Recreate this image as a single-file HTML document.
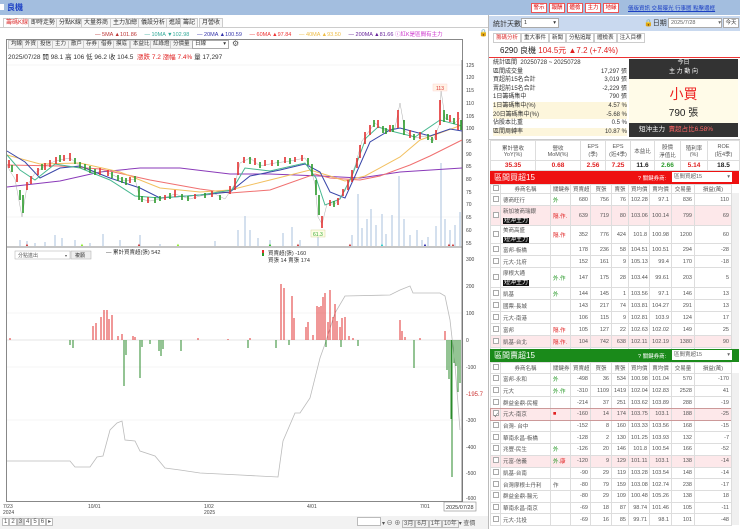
<!DOCTYPE html>
<html><head><meta charset="utf-8"><style>
*{margin:0;padding:0;box-sizing:border-box}
body{width:740px;height:529px;overflow:hidden;background:#fff;font-family:"Liberation Sans","Noto Sans CJK TC",sans-serif;font-size:6px;color:#333;position:relative}
.a{position:absolute;white-space:nowrap}
.tab{position:absolute;top:18px;height:10px;border:1px solid #ccc;border-bottom:none;background:#f6f6f6;font-size:6px;line-height:9px;padding:0 2px;color:#333}
.btn{position:absolute;height:9px;border:1px solid #ccc;background:#f4f4f4;font-size:5.5px;line-height:7px;padding:0 2px}
table{border-collapse:collapse;font-size:5.5px;table-layout:fixed}
td{border:1px solid #ddd;padding:0 2px;text-align:right;overflow:hidden;white-space:nowrap;color:#555}
td.l{text-align:left}
td.c{text-align:center}
.tag{background:#111;color:#fff;padding:0 1px;font-size:6px}
.cb{display:inline-block;width:6px;height:6px;border:1px solid #aaa;background:#fff}
.r{color:#e02020}.g{color:#2a9a2a}
</style></head><body>
<div class="a" style="left:0;top:0;width:740px;height:15px;background:#a3bedf"></div>
<div class="a" style="left:0;top:4px;width:4px;height:6px;background:#fff"></div>
<div class="a" style="left:7px;top:2px;font-size:8px;color:#1b3fc4;font-weight:bold">良機</div>
<div class="a" style="left:531px;top:3px;height:10px;width:16px;background:#fff;border:1px solid #e55;color:#d00;font-size:5.5px;line-height:8px;text-align:center">警示</div>
<div class="a" style="left:549px;top:3px;height:10px;width:16px;background:#fff;border:1px solid #e55;color:#d00;font-size:5.5px;line-height:8px;text-align:center">報酬</div>
<div class="a" style="left:567px;top:3px;height:10px;width:16px;background:#fff;border:1px solid #e55;color:#d00;font-size:5.5px;line-height:8px;text-align:center">體檢</div>
<div class="a" style="left:585px;top:3px;height:10px;width:16px;background:#fff;border:1px solid #e55;color:#d00;font-size:5.5px;line-height:8px;text-align:center">主力</div>
<div class="a" style="left:603px;top:3px;height:10px;width:16px;background:#fff;border:1px solid #e55;color:#d00;font-size:5.5px;line-height:8px;text-align:center">地緣</div>
<div class="a" style="left:628px;top:4px;font-size:5.5px;color:#1b3fc4;text-decoration:underline">儀版資訊 交易曝光 行事曆 點擊邊框</div>

<div class="tab" style="left:3px;color:#d33;background:#fff">籌碼K線</div>
<div class="tab" style="left:28px">即時走勢</div>
<div class="tab" style="left:56px">分點K線</div>
<div class="tab" style="left:81px">大量券商</div>
<div class="tab" style="left:110px">主力加總</div>
<div class="tab" style="left:138px">儀設分析</div>
<div class="tab" style="left:166px">進設</div>
<div class="tab" style="left:180px">籌記</div>
<div class="tab" style="left:199px">月營收</div>
<div class="a" style="left:0;top:27px;width:488px;height:1px;background:#ccc"></div>
<div class="a" style="left:95px;top:30px;font-size:5.5px;color:#b33">— 5MA ▲101.86 <span style="color:#3a9">&nbsp;&nbsp;&nbsp;&nbsp;— 10MA ▼102.98</span> <span style="color:#33a">&nbsp;&nbsp;&nbsp;&nbsp;— 20MA ▲100.59</span> <span style="color:#e33">&nbsp;&nbsp;&nbsp;&nbsp;— 60MA ▲97.84</span> <span style="color:#eb4">&nbsp;&nbsp;&nbsp;&nbsp;— 40MA ▲93.50</span> <span style="color:#629">&nbsp;&nbsp;&nbsp;&nbsp;— 200MA ▲81.66</span> <span style="color:#c3c">ⓘ紅K是區間有主力</span></div>
<div class="a" style="left:479px;top:29px;font-size:7px">🔒</div>

<div class="a" style="left:6px;top:39px;width:457px;height:463px;border:1px solid #888"></div>
<div class="btn" style="left:8px;top:40px">均線</div><div class="btn" style="left:22px;top:40px">外資</div><div class="btn" style="left:37px;top:40px">投信</div><div class="btn" style="left:52px;top:40px">主力</div><div class="btn" style="left:68px;top:40px">散戶</div><div class="btn" style="left:83px;top:40px">存券</div><div class="btn" style="left:98px;top:40px">借券</div><div class="btn" style="left:113px;top:40px">摸底</div><div class="btn" style="left:130px;top:40px">本益比</div><div class="btn" style="left:150px;top:40px">紅綠燈</div><div class="btn" style="left:170px;top:40px">分價量</div>
<div class="a" style="left:192px;top:40px;width:37px;height:9px;border:1px solid #aaa;font-size:5.5px;line-height:7px;padding-left:2px;background:#fff">日線<span style="float:right;padding-right:2px">▾</span></div>
<div class="a" style="left:232px;top:39px;font-size:8px;color:#555">⚙</div>
<div class="a" style="left:8px;top:51px;font-size:6.5px;color:#333">2025/07/28 開 98.1 高 106 低 96.2 收 104.5 &nbsp;<span class="r">漲跌 7.2 漲幅 7.4%</span> 量 17,297</div>

<svg style="position:absolute;left:0;top:0" width="490" height="529" viewBox="0 0 490 529">
<g stroke="#eee" stroke-width="0.6"><path d="M7 65H462M7 141H462M7 217H462M7 313H462M7 367H462M7 420H462"/></g>
<path d="M462 60V502M7 247H462" stroke="#666" stroke-width="0.8"/>
<g font-size="5" fill="#444" font-family="Liberation Sans">
<text x="466" y="67">125</text><text x="466" y="79">120</text><text x="466" y="92">115</text><text x="466" y="105">110</text><text x="466" y="118">105</text><text x="466" y="130">100</text><text x="466" y="143">95</text><text x="466" y="156">90</text><text x="466" y="168">85</text><text x="466" y="181">80</text><text x="466" y="194">75</text><text x="466" y="206">70</text><text x="466" y="219">65</text><text x="466" y="232">60</text><text x="466" y="245">55</text>
<text x="466" y="261">300</text><text x="466" y="288">200</text><text x="466" y="315">100</text><text x="466" y="342">0</text><text x="466" y="369">-100</text><text x="466" y="422">-300</text><text x="466" y="449">-400</text><text x="466" y="475">-500</text><text x="466" y="500">-600</text>
<text x="466" y="396" fill="#c33" font-size="6">-195.7</text>
<text x="3" y="508">7/23</text><text x="3" y="514">2024</text><text x="88" y="508">10/01</text><text x="204" y="508">1/02</text><text x="204" y="514">2025</text><text x="307" y="508">4/01</text><text x="420" y="508">7/01</text>
</g>
<rect x="444" y="502" width="32" height="9" fill="#fff" stroke="#888" stroke-width="0.6"/><text x="446" y="509" font-size="5.5" fill="#333">2025/07/28</text>
<g stroke="#b8cbe3" stroke-width="1.2" fill="none">
<path d="M20 246V240M27 246V241M35 246V243M45 246V242M55 246V235M62 246V238M75 246V240M90 246V243M103 246V234M120 246V240M140 246V235M160 246V244M215 246V241M238 246V230M245 246V216M250 246V230M258 246V238M270 246V240M283 246V233M292 246V227M300 246V240M318 246V237M352 246V235M358 246V194M362 246V228M367 246V219M371 246V209M376 246V225M382 246V214M386 246V234M392 246V215M399 246V176M404 246V219M410 246V235M417 246V230M422 246V240M428 246V237M436 246V226M441 246V163M445 246V219M450 246V230M455 246V225M460 246V212"/>
</g>
<g font-size="4" fill="#c33"><text x="25" y="246">▲</text><text x="80" y="246" fill="#8e2">▲</text><text x="137" y="246">▲</text><text x="176" y="246" fill="#8e2">▲</text><text x="268" y="246" fill="#2b2">▲</text><text x="296" y="246">▲</text><text x="348" y="246">▲</text><text x="380" y="246" fill="#2cc">▲</text><text x="423" y="246" fill="#22a">▲</text><text x="447" y="246">▲▲</text></g>
<g fill="none" stroke-width="1">
<path stroke="#8a3ab9" d="M7 187L60 181L100 172L140 168L180 168L230 174L270 174L320 176L360 178L400 172L462 168"/>
<path stroke="#f07070" d="M7 165L60 166L100 169L150 180L200 189L230 193L270 190L315 174L330 178L360 180L380 176L410 165L430 156L462 140"/>
<path stroke="#f2c060" d="M7 155L40 164L80 163L120 172L160 188L200 192L230 190L270 180L310 170L330 176L345 181L365 176L400 157L420 140L440 133L462 125"/>
<path stroke="#3845a8" d="M7 151L25 162L40 178L60 168L80 166L110 178L140 188L160 198L200 195L230 192L250 176L280 170L305 164L320 172L330 192L345 198L355 176L370 142L390 130L400 128L430 136L450 129L462 131"/>
<path stroke="#48b890" d="M7 155L20 170L35 180L55 164L80 168L110 180L135 196L160 198L200 195L232 190L245 168L270 171L305 163L316 178L325 205L340 199L352 176L366 138L378 127L395 132L415 137L440 120L462 126"/>
</g>
<path fill="none" stroke="#999" stroke-width="0.4" d="M7 166L15 179L22 217L27 186L35 173L45 166L55 161L70 158L80 166L95 173L105 171L115 176L125 181L135 179L140 199L150 201L160 199L175 194L190 199L200 196L215 194L225 199L235 184L240 163L250 158L260 166L275 163L290 161L305 158L310 166L315 184L318 217L322 224L327 204L335 204L345 191L355 166L362 141L375 123L385 131L395 128L400 103L405 131L415 138L425 136L433 141L440 123L441 90L445 118L455 123L460 118"/>
<path fill="none" stroke="#e23030" stroke-width="1.6" d="M9 160V168M17 174V182M27 182V190M31 176V184M38 168V175M45 163V170M50 160V167M56 157V164M64 155V161M70 153V161M100 168V175M108 170V176M130 177V183M148 197V203M165 195V200M175 190V197M195 194V199M212 191V197M230 186V194M235 178V190M238 162V175M244 157V163M255 158V165M265 160V166M272 160V166M285 157V163M295 157V162M302 155V161M322 216V228M330 200V206M338 198V205M343 189V196M348 180V190M352 170V182M357 158V168M360 145V158M365 132V144M370 125V135M378 120V128M390 125V132M398 110V128M410 130V138M420 132V139M436 130V140M440 100V125M450 115V122M458 112V130"/>
<path fill="none" stroke="#2a9a2a" stroke-width="1.6" d="M12 165V172M20 190V200M23 195V213M42 164V170M60 155V162M75 158V164M80 162V168M85 164V170M90 166V173M95 169V175M112 172V178M118 175V181M122 177V183M126 178V185M135 176V182M139 186V200M142 196V202M155 197V203M160 196V201M170 193V199M182 194V200M188 196V201M205 193V198M220 195V200M250 157V164M260 162V168M278 160V166M290 158V164M308 158V165M312 164V176M316 180V195M319 195V215M334 201V207M374 120V127M383 126V133M386 128V134M393 125V132M404 120V135M414 134V140M428 134V140M432 137V143M444 110V122M447 114V120M454 118V124M461 120V130"/>
<rect x="433" y="84" width="14" height="7" fill="#fff3e6" stroke="#fcc" stroke-width="0.4"/><text x="436" y="90" font-size="5" fill="#d33">113</text>
<rect x="311" y="230" width="14" height="7" fill="#fdfde6" stroke="#cc8" stroke-width="0.4"/><text x="313" y="236" font-size="5" fill="#3a3">61.3</text>
<path d="M7 340H462" stroke="#ccc" stroke-width="0.5"/>
<path fill="none" stroke="#bbb" stroke-width="0.8" d="M7 461L70 461L75 467L90 467L97 457L103 456L110 430L117 423L122 421L125 440L135 441L140 451L155 456L165 468L180 470L200 473L240 475L278 477L283 441L295 413L300 413L310 398L320 358L325 344L335 313L345 296L390 295L400 290L410 286L413 293L440 293L445 296L450 320L455 365L460 430"/>
<path fill="none" stroke="#e23030" stroke-width="1" d="M10 340V338M93 340V326M96 340V323M101 340V317M104 340V310M107 340V310M109 340V319M112 340V315M118 340V336M122 340V334M133 340V336M135 340V337M198 340V338M228 340V339M250 340V338M281 340V284M284 340V288M292 340V296M294 340V318M306 340V327M308 340V322M313 340V335M317 340V306M319 340V307M321 340V306M323 340V297M325 340V293M328 340V322M330 340V290M333 340V317M335 340V304M337 340V321M340 340V327M342 340V318M345 340V317M349 340V336M353 340V338M400 340V320M402 340V331M405 340V337M420 340V338M445 340V331"/>
<path fill="none" stroke="#2a8a2a" stroke-width="1" d="M70 340V345M73 340V348M124 340V386M126 340V355M140 340V378M142 340V347M150 340V344M159 340V351M161 340V356M163 340V349M181 340V351M248 340V348M276 340V348M289 340V345M326 340V347M341 340V347M358 340V346M414 340V368M447 340V370M449 340V379M451 340V419M452 340V477M454 340V363M456 340V366M458 340V392M460 340V383"/>
<rect x="15" y="251" width="55" height="8" fill="#fff" stroke="#aaa" stroke-width="0.5"/><text x="18" y="257" font-size="5" fill="#555">分點進出</text><text x="65" y="257" font-size="4" fill="#555">▾</text>
<rect x="71" y="251" width="20" height="8" fill="#eee" stroke="#aaa" stroke-width="0.5"/><text x="75" y="257" font-size="5" fill="#333">複願</text>
<text x="106" y="254" font-size="5.5" fill="#333">— 累計買賣超(張) 542</text>
<rect x="262" y="250" width="2" height="3" fill="#e23030"/><rect x="262" y="253" width="2" height="3" fill="#2a9a2a"/>
<text x="268" y="255" font-size="5.5" fill="#333">買賣超(張) -160</text><text x="268" y="262" font-size="5.5" fill="#333">買張 14 賣張 174</text>
</svg>
<div class="a" style="left:0;top:516px;width:488px;height:13px;background:#f2f2f2"></div>
<div class="a" style="left:2px;top:518px;font-size:6px;color:#555"><span style="border:1px solid #bbb;padding:0 1px;background:#fff">1</span><span style="border:1px solid #bbb;padding:0 1px;background:#fff">2</span><span style="border:1px solid #bbb;padding:0 1px;background:#ddd">3</span><span style="border:1px solid #bbb;padding:0 1px;background:#fff">4</span><span style="border:1px solid #bbb;padding:0 1px;background:#fff">5</span><span style="border:1px solid #bbb;padding:0 1px;background:#fff">6</span><span style="border:1px solid #bbb;padding:0 1px;background:#fff">▸</span></div>
<div class="a" style="left:357px;top:517px;width:24px;height:9px;border:1px solid #bbb;background:#fff"></div>
<div class="a" style="left:382px;top:518px;font-size:6px;color:#555">▾ ⊖ ⊕ <span style="border:1px solid #bbb;padding:0 1px">3月</span><span style="border:1px solid #bbb;padding:0 1px">6月</span><span style="border:1px solid #bbb;padding:0 1px">1年</span><span style="border:1px solid #bbb;padding:0 1px">10年</span>▾ 查價</div>
<div class="a" style="left:488px;top:15px;width:1px;height:514px;background:#bbb"></div>

<div class="a" style="left:489px;top:16px;width:251px;height:15px;background:#c9d9ef"></div>
<div class="a" style="left:493px;top:19px;font-size:7px;color:#333">統計天數</div>
<div class="a" style="left:521px;top:18px;width:38px;height:10px;background:#fff;border:1px solid #aaa;font-size:5.5px;padding-left:2px;line-height:8px">1<span style="float:right;padding-right:2px">▾</span></div>
<div class="a" style="left:644px;top:18px;font-size:7px;color:#333">🔒日期</div>
<div class="a" style="left:668px;top:18px;width:54px;height:10px;background:#fff;border:1px solid #aaa;font-size:5.5px;padding-left:2px;line-height:8px;color:#666">2025/7/28 <span style="float:right">▾</span></div>
<div class="a" style="left:723px;top:18px;width:16px;height:10px;background:#fff;border:1px solid #aaa;font-size:5.5px;line-height:8px;text-align:center">今天</div>
<div class="a" style="left:493px;top:33px;font-size:5.5px"><span style="border:1px solid #ccc;padding:1px 2px;color:#d33">籌碼分析</span><span style="border:1px solid #ccc;padding:1px 2px">重大事件</span><span style="border:1px solid #ccc;padding:1px 2px">新聞</span><span style="border:1px solid #ccc;padding:1px 2px">分點追蹤</span><span style="border:1px solid #ccc;padding:1px 2px">體檢表</span><span style="border:1px solid #ccc;padding:1px 2px">注入目標</span></div>
<div class="a" style="left:500px;top:45px;font-size:8px;color:#222">6290 良機 <span class="r">104.5元 ▲7.2 (+7.4%)</span></div>
<div class="a" style="left:489px;top:57px;width:251px;height:1px;background:#e33"></div>
<div class="a" style="left:493px;top:59px;width:134px;font-size:6px;line-height:8.6px;color:#333">
<div>統計區間 &nbsp;20250728 ~ 20250728</div>
<div>區間成交量<span style="float:right">17,297 張</span></div>
<div>買超前15名合計<span style="float:right">3,019 張</span></div>
<div>賣超前15名合計<span style="float:right">-2,229 張</span></div>
<div>1日籌碼集中<span style="float:right">790 張</span></div>
<div style="background:#fdf6dc">1日籌碼集中(%)<span style="float:right">4.57 %</span></div>
<div style="background:#fdf6dc">20日籌碼集中(%)<span style="float:right">-5.68 %</span></div>
<div>佔股本比重<span style="float:right">0.5 %</span></div>
<div style="background:#fdf6dc">區間周轉率<span style="float:right">10.87 %</span></div>
</div>
<div class="a" style="left:629px;top:59px;width:109px;height:20px;background:#333;color:#fff;font-size:6px;text-align:center;line-height:9px">今日<br>主 力 動 向</div>
<div class="a" style="left:629px;top:79px;width:109px;height:44px;background:#fffbe8;text-align:center"><div style="color:#e22;font-size:14px;margin-top:5px">小買</div><div style="font-size:10px;color:#222">790 張</div></div>
<div class="a" style="left:629px;top:123px;width:109px;height:14px;background:#333;color:#fff;font-size:6.5px;line-height:14px;padding-left:10px">短沖主力 &nbsp;<span style="color:#f66">賣超占比6.58%</span></div>
<div class="a" style="left:489px;top:139px;width:251px;height:1px;background:#ccc"></div>
<table class="a" style="left:490px;top:140px;width:249px">
<colgroup><col style="width:45px"><col style="width:45px"><col style="width:25px"><col style="width:25px"><col style="width:24px"><col style="width:26px"><col style="width:27px"><col style="width:32px"></colgroup>
<tr style="height:20px"><td class="c">累計營收<br>YoY(%)</td><td class="c">營收<br>MoM(%)</td><td class="c">EPS<br>(季)</td><td class="c">EPS<br>(近4季)</td><td class="c">本益比</td><td class="c">股價<br>淨值比</td><td class="c">殖利率<br>(%)</td><td class="c">ROE<br>(近4季)</td></tr>
<tr style="height:10px;font-weight:bold;font-size:6.5px"><td class="c r">35.35</td><td class="c r">0.68</td><td class="c r">2.56</td><td class="c r">7.25</td><td class="c" style="color:#222">11.6</td><td class="c g">2.66</td><td class="c r">5.14</td><td class="c" style="color:#222">18.5</td></tr>
</table>
<div class="a" style="left:490px;top:171px;width:249px;height:13px;background:#ee1111"></div>
<div class="a" style="left:494px;top:172px;font-size:8px;color:#fff">區間買超15</div>
<div class="a" style="left:638px;top:174px;font-size:5.5px;color:#fff">? 關鍵券商:</div>
<div class="a" style="left:672px;top:172px;width:60px;height:10px;background:#fff;font-size:5.5px;line-height:10px;padding-left:2px;color:#666">區間買超15<span style="float:right;padding-right:2px">▾</span></div>
<table class="a" style="left:490px;top:184px;width:241px">
<colgroup><col style="width:10px"><col style="width:50px"><col style="width:20px"><col style="width:20px"><col style="width:21px"><col style="width:17px"><col style="width:21px"><col style="width:22px"><col style="width:23px"><col style="width:37px"></colgroup>
<tr style="height:9px"><td class="c"><span class="cb"></span></td><td class="c">券商名稱</td><td class="c">關鍵券商</td><td class="c">買賣超</td><td class="c">買張</td><td class="c">賣張</td><td class="c">買均價</td><td class="c">賣均價</td><td class="c">交易量</td><td class="c">損益(萬)</td></tr>
<tr style="height:12px"><td><span class="cb"></span></td><td class="l">德商旺行</td><td class="l g">外</td><td>680</td><td>756</td><td>76</td><td>102.28</td><td>97.1</td><td>836</td><td>110</td></tr>
<tr style="height:20px;background:#fde8ea"><td><span class="cb"></span></td><td class="l">新加坡商瑞銀<br><span class="tag">短沖主力</span></td><td class="l r">隔.作.</td><td>639</td><td>719</td><td>80</td><td>103.06</td><td>100.14</td><td>799</td><td>69</td></tr>
<tr style="height:18px"><td><span class="cb"></span></td><td class="l">美商高盛<br><span class="tag">短沖主力</span></td><td class="l r">隔.作</td><td>352</td><td>776</td><td>424</td><td>101.8</td><td>100.98</td><td>1200</td><td>60</td></tr>
<tr style="height:12px"><td><span class="cb"></span></td><td class="l">富邦-板橋</td><td></td><td>178</td><td>236</td><td>58</td><td>104.51</td><td>100.51</td><td>294</td><td>-28</td></tr>
<tr style="height:12px"><td><span class="cb"></span></td><td class="l">元大-北府</td><td></td><td>152</td><td>161</td><td>9</td><td>105.13</td><td>99.4</td><td>170</td><td>-18</td></tr>
<tr style="height:20px"><td><span class="cb"></span></td><td class="l">摩根大通<br><span class="tag">短沖主力</span></td><td class="l g">外.作</td><td>147</td><td>175</td><td>28</td><td>103.44</td><td>99.61</td><td>203</td><td>5</td></tr>
<tr style="height:12px"><td><span class="cb"></span></td><td class="l">凱基</td><td class="l g">外</td><td>144</td><td>145</td><td>1</td><td>103.56</td><td>97.1</td><td>146</td><td>13</td></tr>
<tr style="height:12px"><td><span class="cb"></span></td><td class="l">國票-長城</td><td></td><td>143</td><td>217</td><td>74</td><td>103.81</td><td>104.27</td><td>291</td><td>13</td></tr>
<tr style="height:12px"><td><span class="cb"></span></td><td class="l">元大-南港</td><td></td><td>106</td><td>115</td><td>9</td><td>102.81</td><td>103.9</td><td>124</td><td>17</td></tr>
<tr style="height:12px"><td><span class="cb"></span></td><td class="l">富邦</td><td class="l r">隔.作</td><td>105</td><td>127</td><td>22</td><td>102.63</td><td>102.02</td><td>149</td><td>25</td></tr>
<tr style="height:12px;background:#fde8ea"><td><span class="cb"></span></td><td class="l">凱基-台北</td><td class="l r">隔.作.</td><td>104</td><td>742</td><td>638</td><td>102.11</td><td>102.19</td><td>1380</td><td>90</td></tr>
<tr style="height:12px"><td><span class="cb"></span></td><td class="l">統一</td><td class="l g">外.作</td><td>89</td><td>172</td><td>83</td><td>102.61</td><td>102.53</td><td>255</td><td>12</td></tr>
</table>
<div class="a" style="left:731px;top:193px;width:8px;height:157px;background:#f0f0f0;border-left:1px solid #ddd"></div>
<div class="a" style="left:490px;top:349px;width:249px;height:13px;background:#1a8a1a"></div>
<div class="a" style="left:494px;top:350px;font-size:8px;color:#fff">區間賣超15</div>
<div class="a" style="left:638px;top:352px;font-size:5.5px;color:#fff">? 關鍵券商:</div>
<div class="a" style="left:672px;top:350px;width:60px;height:10px;background:#fff;font-size:5.5px;line-height:10px;padding-left:2px;color:#666">區間賣超15<span style="float:right;padding-right:2px">▾</span></div>
<table class="a" style="left:490px;top:362px;width:241px">
<colgroup><col style="width:10px"><col style="width:50px"><col style="width:20px"><col style="width:20px"><col style="width:21px"><col style="width:17px"><col style="width:21px"><col style="width:22px"><col style="width:23px"><col style="width:37px"></colgroup>
<tr style="height:11px"><td class="c"><span class="cb"></span></td><td class="c">券商名稱</td><td class="c">關鍵券商</td><td class="c">買賣超</td><td class="c">買張</td><td class="c">賣張</td><td class="c">買均價</td><td class="c">賣均價</td><td class="c">交易量</td><td class="c">損益(萬)</td></tr>
<tr style="height:11.7px"><td><span class="cb"></span></td><td class="l">富邦-永和</td><td class="l g">外</td><td>-498</td><td>36</td><td>534</td><td>100.98</td><td>101.04</td><td>570</td><td>-170</td></tr>
<tr style="height:11.7px"><td><span class="cb"></span></td><td class="l">元大</td><td class="l g">外.作</td><td>-310</td><td>1109</td><td>1419</td><td>102.04</td><td>102.83</td><td>2528</td><td>41</td></tr>
<tr style="height:11.7px"><td><span class="cb"></span></td><td class="l">群益金鼎-民權</td><td></td><td>-214</td><td>37</td><td>251</td><td>103.62</td><td>103.89</td><td>288</td><td>-19</td></tr>
<tr style="height:11.7px;background:#fde8ea;outline:1px solid #c99"><td><span class="cb">✓</span></td><td class="l">元大-南京</td><td class="l r">■</td><td>-160</td><td>14</td><td>174</td><td>103.75</td><td>103.1</td><td>188</td><td>-25</td></tr>
<tr style="height:11.7px"><td><span class="cb"></span></td><td class="l">台灣- 台中</td><td></td><td>-152</td><td>8</td><td>160</td><td>103.33</td><td>103.56</td><td>168</td><td>-15</td></tr>
<tr style="height:11.7px"><td><span class="cb"></span></td><td class="l">華南永昌-板橋</td><td></td><td>-128</td><td>2</td><td>130</td><td>101.25</td><td>103.93</td><td>132</td><td>-7</td></tr>
<tr style="height:11.7px"><td><span class="cb"></span></td><td class="l">兆豐-民生</td><td class="l g">外</td><td>-126</td><td>20</td><td>146</td><td>101.8</td><td>100.54</td><td>166</td><td>-52</td></tr>
<tr style="height:11.7px;background:#fde8ea"><td><span class="cb"></span></td><td class="l">元富-信義</td><td class="l g">外.<span class="r">康</span></td><td>-120</td><td>9</td><td>129</td><td>101.11</td><td>103.1</td><td>138</td><td>-14</td></tr>
<tr style="height:11.7px"><td><span class="cb"></span></td><td class="l">凱基-台南</td><td></td><td>-90</td><td>29</td><td>119</td><td>103.28</td><td>103.54</td><td>148</td><td>-14</td></tr>
<tr style="height:11.7px"><td><span class="cb"></span></td><td class="l">台灣摩根士丹利</td><td class="l">作</td><td>-80</td><td>79</td><td>159</td><td>103.08</td><td>102.74</td><td>238</td><td>-17</td></tr>
<tr style="height:11.7px"><td><span class="cb"></span></td><td class="l">群益金鼎-醫元</td><td></td><td>-80</td><td>29</td><td>109</td><td>100.48</td><td>105.26</td><td>138</td><td>18</td></tr>
<tr style="height:11.7px"><td><span class="cb"></span></td><td class="l">華南永昌-南京</td><td></td><td>-69</td><td>18</td><td>87</td><td>98.74</td><td>101.46</td><td>105</td><td>-11</td></tr>
<tr style="height:11.7px"><td><span class="cb"></span></td><td class="l">元大-北投</td><td></td><td>-69</td><td>16</td><td>85</td><td>99.71</td><td>98.1</td><td>101</td><td>-48</td></tr>
</table>
<div class="a" style="left:731px;top:373px;width:8px;height:152px;background:#f0f0f0;border-left:1px solid #ddd"></div>
</body></html>
